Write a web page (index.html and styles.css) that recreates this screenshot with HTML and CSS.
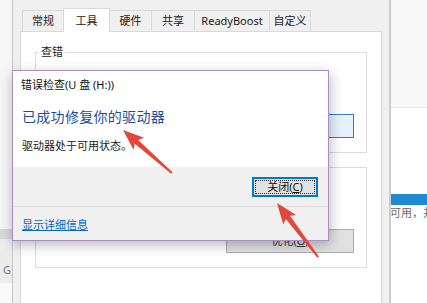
FILE: index.html
```html
<!DOCTYPE html>
<html lang="zh-CN">
<head>
<meta charset="utf-8">
<title>错误检查</title>
<link rel="stylesheet" href="styles.css">
</head>
<body>
<div class="screen">
  <div class="left-strip">
    <div class="ls-top"></div>
    <div class="ls-band"></div>
    <div class="ls-g">G</div>
    <div class="ls-bottom"></div>
  </div>
  <div class="props">
    <div class="tabs">
      <div class="tab w1">常规</div>
      <div class="tab active w2">工具</div>
      <div class="tab w3">硬件</div>
      <div class="tab w4">共享</div>
      <div class="tab w5">ReadyBoost</div>
      <div class="tab w6">自定义</div>
    </div>
    <div class="panel">
      <div class="group">
        <div class="g-label">查错</div>
        <div class="g-text">此选项将检查驱动器中的文件系统错误。</div>
        <div class="btn btn-blue">检查(C)</div>
      </div>
      <div class="group">
        <div class="g-label">对驱动器进行优化和碎片整理</div>
        <div class="g-text">优化计算机的驱动器可以帮助其更高效运行。</div>
        <div class="btn">优化(<u>O</u>)</div>
      </div>
    </div>
  </div>
  <div class="right-strip">
    <div class="rs-top"></div>
    <div class="rs-gap"></div>
    <div class="rs-bar"></div>
    <div class="rs-text">可用，并</div>
  </div>
</div>

<div class="dialog">
  <div class="dlg-title">错误检查(U 盘 (H:))</div>
  <div class="dlg-main">
    <div class="dlg-heading">已成功修复你的驱动器</div>
    <div class="dlg-body">驱动器处于可用状态。</div>
  </div>
  <div class="dlg-foot">
    <div class="btn-close">关闭(<u>C</u>)</div>
  </div>
  <div class="dlg-more"><span class="link">显示详细信息</span></div>
</div>

<svg class="arrows" width="427" height="303" viewBox="0 0 427 303">
  <path class="arrow" transform="translate(123 130) rotate(41.3)" d="M0 0 L21 -8 L18 -2.6 L65 -1 L65 1 L18 2.6 L21 8 Z"/>
  <path class="arrow" transform="translate(277 203) rotate(52.8)" d="M0 0 L21 -8 L18 -2.6 L68 -1 L68 1 L18 2.6 L21 8 Z"/>
</svg>
</body>
</html>
```

FILE: styles.css
```css
html, body {
  margin: 0;
  padding: 0;
}
body {
  width: 427px;
  height: 303px;
  overflow: hidden;
  position: relative;
  background: #fff;
  font-family: "Noto Sans", "Noto Sans CJK SC", sans-serif;
  font-size: 11px;
  color: #1a1a1a;
}
.screen {
  display: flex;
  height: 303px;
}

/* left strip (another window) */
.left-strip {
  width: 12px;
  display: flex;
  flex-direction: column;
  background: #f7f7f7;
}
.ls-top { height: 229px; background: #f6f6f6; }
.ls-band { height: 10px; background: #d8d8d8; }
.ls-g {
  height: 44px;
  background: #ececec;
  color: #7a7a7a;
  font-size: 11px;
  line-height: 14px;
  padding: 24px 0 0 3px;
  box-sizing: border-box;
}
.ls-bottom { flex: 1; background: #fafafa; }

/* properties window */
.props {
  width: 379px;
  box-sizing: border-box;
  border-left: 1px solid #c6c6c6;
  border-right: 2px solid #cdcdcd;
  background: #f0f0f0;
  padding: 8px 7px 0 7px;
  display: flex;
  flex-direction: column;
}
.tabs {
  display: flex;
  align-items: flex-end;
  height: 23px;
  padding-left: 3px;
  position: relative;
  z-index: 1;
}
.tab {
  height: 21px;
  box-sizing: border-box;
  border: 1px solid #d9d9d9;
  border-bottom: none;
  margin-left: -1px;
  background: #f0f0f0;
  display: flex;
  align-items: center;
  justify-content: center;
  line-height: 12px;
  color: #1a1a1a;
}
.tab.active {
  height: 24px;
  margin-bottom: -1px;
  background: #fff;
  position: relative;
  z-index: 2;
}
.w1 { width: 42px; }
.w2 { width: 47px; }
.w3 { width: 43px; }
.w4 { width: 44px; }
.w5 { width: 76px; }
.w6 { width: 42px; }

.panel {
  flex: 1;
  background: #fff;
  border: 1px solid #d9d9d9;
  border-bottom: none;
  padding: 20px 14px 0 14px;
  display: flex;
  flex-direction: column;
  gap: 14px;
}
.group {
  height: 101px;
  box-sizing: border-box;
  border: 1px solid #dcdcdc;
  display: flex;
  flex-direction: column;
  padding: 0 12px 14px 3px;
}
.g-label {
  margin-top: -7px;
  align-self: flex-start;
  background: #fff;
  padding: 0 2px;
  line-height: 12px;
}
.g-text {
  flex: 1;
  margin: 20px 0 0 8px;
  line-height: 14px;
}
.btn {
  align-self: flex-end;
  width: 128px;
  height: 24px;
  box-sizing: border-box;
  border: 1px solid #adadad;
  background: #e1e1e1;
  display: flex;
  align-items: center;
  justify-content: center;
  line-height: 12px;
  color: #333;
}
.btn-blue {
  background: #e5f1fb;
  border-color: #2f7fc8;
}

/* right strip */
.right-strip {
  flex: 1;
  display: flex;
  flex-direction: column;
  background: #fff;
  overflow: hidden;
}
.rs-top {
  height: 107px;
  background: #f8f8f8;
  border-bottom: 1px solid #e6e6e6;
}
.rs-gap { height: 86px; }
.rs-bar { height: 11px; background: #1f8ad2; }
.rs-text {
  white-space: nowrap;
  color: #6a6a6a;
  line-height: 14px;
  margin-top: 1px;
  margin-left: -1px;
}

/* dialog */
.dialog {
  position: absolute;
  left: 12px;
  top: 70px;
  width: 317px;
  height: 171px;
  box-sizing: border-box;
  border: 1px solid #a98fca;
  background: #f0f0f0;
  box-shadow: 1px 4px 12px rgba(0, 0, 0, 0.28);
  display: flex;
  flex-direction: column;
  z-index: 2;
}
.dlg-title {
  height: 27px;
  background: #fff;
  padding-left: 8px;
  display: flex;
  align-items: center;
  color: #111;
  line-height: 12px;
}
.dlg-main {
  height: 69px;
  box-sizing: border-box;
  background: #fff;
  padding: 10px 0 0 9px;
}
.dlg-heading {
  font-size: 14px;
  line-height: 18px;
  color: #1c4c9e;
  letter-spacing: 0.3px;
}
.dlg-body {
  margin-top: 13px;
  line-height: 14px;
  color: #1a1a1a;
}
.dlg-foot {
  height: 39px;
  box-sizing: border-box;
  padding: 10px 10px 0 0;
  display: flex;
  justify-content: flex-end;
  align-items: flex-start;
}
.btn-close {
  width: 66px;
  height: 20px;
  box-sizing: border-box;
  border: 1px solid #0078d7;
  box-shadow: inset 0 0 0 1px #0078d7;
  background: #e1e1e1;
  outline: 1px dotted #333;
  outline-offset: -4px;
  display: flex;
  align-items: center;
  justify-content: center;
  line-height: 12px;
  color: #111;
}
.dlg-more {
  flex: 1;
  border-top: 1px solid #dddddd;
  padding: 10px 0 0 9px;
}
.link {
  color: #0066cc;
  text-decoration: underline;
  line-height: 14px;
}

/* annotation arrows */
.arrows {
  position: absolute;
  left: 0;
  top: 0;
  z-index: 3;
  pointer-events: none;
}
.arrow {
  fill: #e4463b;
}
```
